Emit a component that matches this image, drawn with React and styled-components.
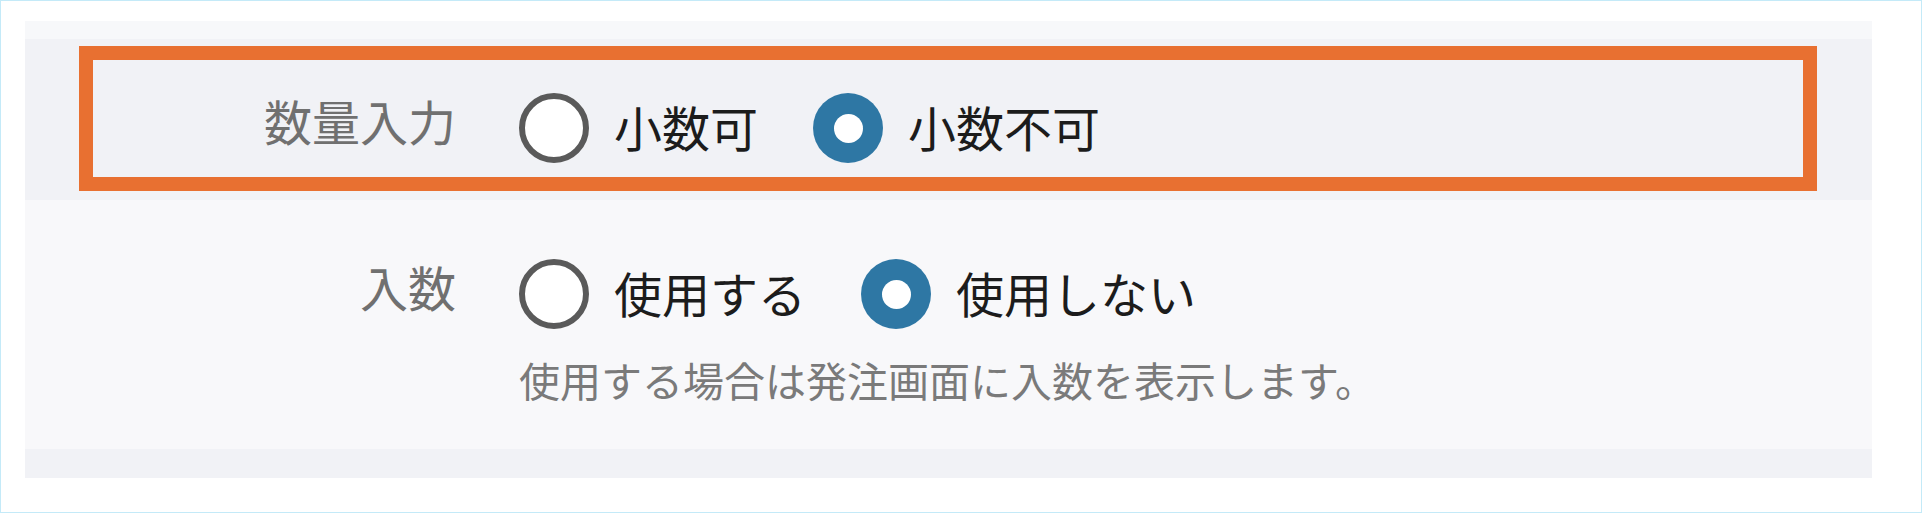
import React from 'react';
import styled, { createGlobalStyle } from 'styled-components';

const Global = createGlobalStyle`
  html, body { margin: 0; padding: 0; background: #ffffff; }
  body { font-family: "Noto Sans CJK JP", "Noto Sans", sans-serif; }
  * { box-sizing: border-box; }
`;

const Frame = styled.div`
  width: 1922px;
  height: 513px;
  border: 1px solid #c4eaf8;
  padding: 20px 49px 34px 24px;
  display: flex;
`;

const Panel = styled.div`
  flex: 1;
  display: flex;
  flex-direction: column;
  background: #f7f8fa;
`;

const Strip = styled.div`
  height: ${(p) => p.h}px;
  background: ${(p) => p.bg};
`;

const Row = styled.div`
  position: relative;
  background: ${(p) => p.bg};
  padding: ${(p) => p.top}px 0 ${(p) => p.bottom}px 0;
`;

// annotation rectangle drawn over the first row
const Highlight = styled.div`
  position: absolute;
  top: 7px;
  bottom: 9px;
  left: 54px;
  right: 55px;
  border: 14px solid #e87031;
  pointer-events: none;
`;

const Field = styled.div`
  display: grid;
  grid-template-columns: 431px 1fr;
  column-gap: 63px;
  align-items: start;
`;

const Label = styled.div`
  text-align: right;
  font-size: 48px;
  line-height: 70px;
  color: #707070;
  margin-top: -8px;
  white-space: nowrap;
`;

const Options = styled.div`
  display: flex;
  align-items: center;
  height: 70px;
`;

const Option = styled.label`
  display: flex;
  align-items: center;
  gap: 25px;
  margin-right: 55px;
  font-size: 48px;
  line-height: 70px;
  color: #1c1c1c;
  white-space: nowrap;
`;

const OptionText = styled.span`
  position: relative;
  top: -2px;
`;

const Radio = styled.span`
  width: 70px;
  height: 70px;
  border-radius: 50%;
  flex: none;
  display: flex;
  align-items: center;
  justify-content: center;
  background: ${(p) => (p.checked ? '#2e77a4' : '#ffffff')};
  border: ${(p) => (p.checked ? 'none' : '6px solid #5a5a5a')};
  &::after {
    content: '';
    display: ${(p) => (p.checked ? 'block' : 'none')};
    width: 29px;
    height: 29px;
    border-radius: 50%;
    background: #ffffff;
  }
`;

const Help = styled.div`
  margin-top: 22px;
  font-size: 41px;
  line-height: 56px;
  color: #7a7a7a;
  white-space: nowrap;
`;

const fields = [
  {
    label: '数量入力',
    options: ['小数可', '小数不可'],
    value: 1,
  },
  {
    label: '入数',
    options: ['使用する', '使用しない'],
    value: 1,
    help: '使用する場合は発注画面に入数を表示します。',
  },
];

export default function App() {
  return (
    <>
      <Global />
      <Frame>
        <Panel>
          <Strip h={19} bg="#f7f8fa" />
          <Row bg="#f1f2f6" top={54} bottom={37}>
            <FieldView field={fields[0]} />
            <Highlight />
          </Row>
          <Row bg="#f8f8fa" top={59} bottom={42}>
            <FieldView field={fields[1]} />
          </Row>
          <Strip h={30} bg="#f1f2f6" />
        </Panel>
      </Frame>
    </>
  );
}

function FieldView({ field }) {
  return (
    <Field>
      <Label>{field.label}</Label>
      <div>
        <Options>
          {field.options.map((o, i) => (
            <Option key={o}>
              <Radio checked={i === field.value} />
              <OptionText>{o}</OptionText>
            </Option>
          ))}
        </Options>
        {field.help && <Help>{field.help}</Help>}
      </div>
    </Field>
  );
}
